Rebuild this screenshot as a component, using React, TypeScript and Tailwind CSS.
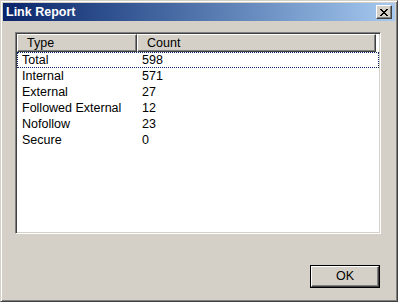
const ROWS: [string, string][] = [
  ["Total", "598"],
  ["Internal", "571"],
  ["External", "27"],
  ["Followed External", "12"],
  ["Nofollow", "23"],
  ["Secure", "0"],
];

const raised =
  "border border-t-white border-l-white border-r-[#404040] border-b-[#404040] shadow-[inset_-1px_-1px_#808080]";

function CloseIcon() {
  return (
    <svg width="8" height="7" viewBox="0 0 8 7" shapeRendering="crispEdges">
      <path
        d="M0 0h2v1h-2zM6 0h2v1h-2zM1 1h2v1h-2zM5 1h2v1h-2zM2 2h4v1h-4zM3 3h2v1h-2zM2 4h4v1h-4zM1 5h2v1h-2zM5 5h2v1h-2zM0 6h2v1h-2zM6 6h2v1h-2z"
        fill="#000"
      />
    </svg>
  );
}

export default function App() {
  return (
    <div
      className="w-[398px] h-[302px] bg-[#d4d0c8] text-black text-[12.5px] leading-none"
      style={{ fontFamily: '"Liberation Sans", Arial, sans-serif' }}
    >
      <div className="flex h-full w-full flex-col border border-t-[#d4d0c8] border-l-[#d4d0c8] border-r-[#404040] border-b-[#404040] p-[2px] shadow-[inset_1px_1px_#fff,inset_-1px_-1px_#808080]">
        <div className="flex h-[18px] items-center justify-between bg-gradient-to-r from-[#0a246a] to-[#a6caf0] pl-[3px] pr-[3px]">
          <span className="text-[12.5px] font-bold text-white">Link Report</span>
          <button className={`flex h-[14px] w-[16px] items-center justify-center bg-[#d4d0c8] ${raised}`}>
            <CloseIcon />
          </button>
        </div>

        <div className="ml-[12px] mr-[14px] mt-[11px] flex h-[202px] flex-col border border-t-[#808080] border-l-[#808080] border-r-white border-b-white bg-white shadow-[inset_1px_1px_#404040,inset_-1px_-1px_#d4d0c8] p-[1px]">
          <div className="flex h-[18px] shrink-0">
            <div className={`flex w-[120px] items-center bg-[#d4d0c8] pl-[9px] ${raised}`}>Type</div>
            <div className={`flex w-[239px] items-center bg-[#d4d0c8] pl-[9px] ${raised}`}>Count</div>
          </div>
          <div className="flex flex-col">
            {ROWS.map(([type, count], i) => (
              <div
                key={type}
                className={`flex h-[16px] items-center ${
                  i === 0 ? "border border-dotted border-[#0a246a]" : "border border-transparent"
                }`}
              >
                <span className="w-[120px] pl-[4px]">{type}</span>
                <span className="pl-[4px]">{count}</span>
              </div>
            ))}
          </div>
        </div>

        <div className="mt-auto mb-[11px] mr-[15px] flex justify-end">
          <button className="h-[23px] w-[70px] border border-black bg-[#d4d0c8]">
            <div className={`flex h-full w-full items-center justify-center ${raised}`}>OK</div>
          </button>
        </div>
      </div>
    </div>
  );
}
